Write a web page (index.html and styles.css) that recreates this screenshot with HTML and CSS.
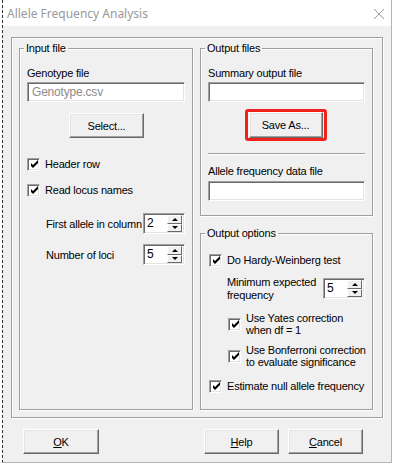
FILE: index.html
```html
<!DOCTYPE html>
<html lang="en">
<head>
  <meta charset="UTF-8" />
  <title>Allele Frequency Analysis</title>
  <link rel="stylesheet" href="styles.css">
</head>
<body>
  <div class="window">
    <div class="titlebar">
      <span class="title">Allele Frequency Analysis</span>
      <svg class="close" width="12" height="12" viewBox="0 0 12 12">
        <path d="M1 1L11 11M11 1L1 11" stroke="#9a9a9a" stroke-width="1" fill="none"/>
      </svg>
    </div>

    <div class="panel">
      <!-- Input file -->
      <fieldset class="group group-input">
        <legend>Input file</legend>
        <div class="label">Genotype file</div>
        <div class="field field-disabled">Genotype.csv</div>
        <div class="center">
          <button class="btn btn-select">Select...</button>
        </div>
        <div class="check check-header">
          <span class="box"><svg width="9" height="9" viewBox="2 2 9 9"><polygon points="3,5 5,7 10,2 10,5 5,10 3,8"/></svg></span>
          <span>Header row</span>
        </div>
        <div class="check check-locus">
          <span class="box"><svg width="9" height="9" viewBox="2 2 9 9"><polygon points="3,5 5,7 10,2 10,5 5,10 3,8"/></svg></span>
          <span>Read locus names</span>
        </div>
        <div class="spin-row spin-first">
          <span>First allele in column</span>
          <div class="spin">
            <span class="spin-val">2</span>
            <span class="spin-btn"><span class="up"></span><span class="down"></span></span>
          </div>
        </div>
        <div class="spin-row spin-loci">
          <span>Number of loci</span>
          <div class="spin">
            <span class="spin-val">5</span>
            <span class="spin-btn"><span class="up"></span><span class="down"></span></span>
          </div>
        </div>
      </fieldset>

      <div class="col">
        <!-- Output files -->
        <fieldset class="group group-output">
          <legend>Output files</legend>
          <div class="label">Summary output file</div>
          <div class="field"></div>
          <div class="center">
            <div class="highlight">
              <button class="btn btn-save">Save As...</button>
            </div>
          </div>
          <div class="separator"></div>
          <div class="label label-allele">Allele frequency data file</div>
          <div class="field field-allele"></div>
        </fieldset>

        <!-- Output options -->
        <fieldset class="group group-options">
          <legend>Output options</legend>
          <div class="check check-hw">
            <span class="box"><svg width="9" height="9" viewBox="2 2 9 9"><polygon points="3,5 5,7 10,2 10,5 5,10 3,8"/></svg></span>
            <span>Do Hardy-Weinberg test</span>
          </div>
          <div class="min-row">
            <span class="min-text">Minimum expected<br>frequency</span>
            <div class="spin">
              <span class="spin-val">5</span>
              <span class="spin-btn"><span class="up"></span><span class="down"></span></span>
            </div>
          </div>
          <div class="check check-sub check-yates">
            <span class="box"><svg width="9" height="9" viewBox="2 2 9 9"><polygon points="3,5 5,7 10,2 10,5 5,10 3,8"/></svg></span>
            <span>Use Yates correction<br>when df = 1</span>
          </div>
          <div class="check check-sub check-bonf">
            <span class="box"><svg width="9" height="9" viewBox="2 2 9 9"><polygon points="3,5 5,7 10,2 10,5 5,10 3,8"/></svg></span>
            <span>Use Bonferroni correction<br>to evaluate significance</span>
          </div>
          <div class="check check-null">
            <span class="box"><svg width="9" height="9" viewBox="2 2 9 9"><polygon points="3,5 5,7 10,2 10,5 5,10 3,8"/></svg></span>
            <span>Estimate null allele frequency</span>
          </div>
        </fieldset>
      </div>
    </div>

    <div class="actions">
      <button class="btn btn-ok"><u>O</u>K</button>
      <span class="spacer"></span>
      <button class="btn"><u>H</u>elp</button>
      <button class="btn"><u>C</u>ancel</button>
    </div>
  </div>
</body>
</html>
```

FILE: styles.css
```css
* {
  box-sizing: border-box;
  margin: 0;
  padding: 0;
}
body {
  background: #fff;
  font-family: "Liberation Sans", Arial, sans-serif;
  font-size: 11px;
  letter-spacing: -0.2px;
  color: #000;
}
.window {
  margin-left: 2px;
  width: 390px;
  height: 463px;
  background: #f0f0f0;
  border-left: 1px dashed #333;
  border-right: 1px solid #b4b4b4;
  border-bottom: 1px solid #b4b4b4;
}
.titlebar {
  height: 26px;
  background: #fff;
  display: flex;
  align-items: center;
  justify-content: space-between;
  padding: 0 6px 0 4px;
}
.title {
  font-family: "Noto Sans", sans-serif;
  font-size: 12px;
  letter-spacing: 0;
  color: #999;
}
.close {
  margin-top: 1px;
}

/* outer etched frame */
.panel {
  margin: 11px 8px 0;
  height: 381px;
  border: 1px solid #a0a0a0;
  box-shadow: 1px 1px 0 #fff, inset 1px 1px 0 #fff;
  padding: 4px 9px 7px 7px;
  display: flex;
  gap: 7px;
}
.group {
  border: 1px solid #a0a0a0;
  box-shadow: 1px 1px 0 #fff, inset 1px 1px 0 #fff;
  padding: 0 7px 0 7px;
  min-width: 0;
}
.group legend {
  line-height: 13px;
  margin-left: -3px;
  padding: 0 2px;
}
.group-input {
  width: 174px;
}
.col {
  width: 173px;
  display: flex;
  flex-direction: column;
}
.group-output {
  height: 174px;
}
.group-options {
  flex: 1;
  margin-top: 11px;
}

.label {
  line-height: 13px;
  margin-top: 12px;
}
.field {
  height: 20px;
  margin-top: 2px;
  background: #fff;
  border: 1px solid;
  border-color: #a0a0a0 #fff #fff #a0a0a0;
  box-shadow: inset 1px 1px 0 #696969, inset -1px -1px 0 #e3e3e3;
  padding: 3px 4px;
  line-height: 12px;
  font-size: 12px;
}
.field-disabled {
  color: #8c8c8c;
}
.center {
  display: flex;
  justify-content: center;
}
.btn {
  font-family: inherit;
  font-size: 11px;
  letter-spacing: -0.2px;
  color: #000;
  background: #f0f0f0;
  height: 25px;
  width: 75px;
  border: 1px solid;
  border-color: #fff #696969 #696969 #fff;
  box-shadow: inset -1px -1px 0 #a0a0a0, inset 1px 1px 0 #e3e3e3;
}
.btn-select {
  margin-top: 11px;
  margin-left: 1px;
}
.highlight {
  margin-top: 7px;
  border: 3px solid #f0221d;
  border-radius: 3px;
  padding: 0 1px;
  height: 32px;
  margin-right: 2px;
}
.btn-save {
  width: 74px;
  height: 26px;
}
.separator {
  margin-top: 12px;
  height: 2px;
  border-top: 1px solid #a0a0a0;
  border-bottom: 1px solid #fff;
}
.label-allele {
  margin-top: 10px;
}
.field-allele {
  margin-top: 3px;
}

/* checkboxes */
.check {
  display: flex;
  align-items: center;
  gap: 5px;
  line-height: 16px;
  white-space: nowrap;
}
.box {
  flex-shrink: 0;
  width: 13px;
  height: 13px;
  background: #fff;
  border: 1px solid;
  border-color: #a0a0a0 #fff #fff #a0a0a0;
  box-shadow: inset 1px 1px 0 #696969, inset -1px -1px 0 #e3e3e3;
  display: flex;
  align-items: center;
  justify-content: center;
}
.box svg {
  display: block;
  margin: 1px 0 0 1px;
}
.check-header {
  margin-top: 18px;
}
.check-locus {
  margin-top: 10px;
}
.check-hw {
  margin-top: 12px;
  margin-left: 1px;
}
.check-sub {
  line-height: 12px;
  margin-left: 20px;
}
.check-yates {
  margin-top: 10px;
}
.check-bonf {
  margin-top: 8px;
}
.check-null {
  margin-top: 10px;
  margin-left: 1px;
}

/* spin controls */
.spin-row {
  display: flex;
  align-items: center;
  justify-content: space-between;
  padding-left: 19px;
  height: 21px;
}
.spin-first {
  margin-top: 15px;
}
.spin-loci {
  margin-top: 10px;
}
.spin {
  width: 42px;
  height: 21px;
  background: #fff;
  border: 1px solid;
  border-color: #a0a0a0 #fff #fff #a0a0a0;
  box-shadow: inset 1px 1px 0 #696969, inset -1px -1px 0 #e3e3e3;
  display: flex;
  align-items: center;
  justify-content: space-between;
  padding: 1px 2px 1px 1px;
}
.spin-val {
  font-size: 12px;
  padding-left: 2px;
  line-height: 17px;
}
.spin-btn {
  width: 15px;
  height: 17px;
  display: flex;
  flex-direction: column;
}
.spin-btn .up,
.spin-btn .down {
  flex: 1;
  background: #f0f0f0;
  border: 1px solid;
  border-color: #fff #696969 #696969 #fff;
  display: flex;
  align-items: center;
  justify-content: center;
}
.spin-btn .up::after {
  content: "";
  border-left: 3px solid transparent;
  border-right: 3px solid transparent;
  border-bottom: 3px solid #000;
}
.spin-btn .down::after {
  content: "";
  border-left: 3px solid transparent;
  border-right: 3px solid transparent;
  border-top: 3px solid #000;
}
.min-row {
  display: flex;
  align-items: flex-start;
  justify-content: space-between;
  margin-top: 8px;
  padding-left: 19px;
}
.min-text {
  line-height: 13px;
}
.min-row .spin {
  margin-top: 2px;
}

/* bottom buttons */
.actions {
  display: flex;
  gap: 9px;
  margin-top: 11px;
  padding: 0 28px 0 20px;
}
.actions .btn {
  width: 75px;
}
.actions .btn-ok {
  width: 76px;
}
.spacer {
  flex: 1;
}
```
